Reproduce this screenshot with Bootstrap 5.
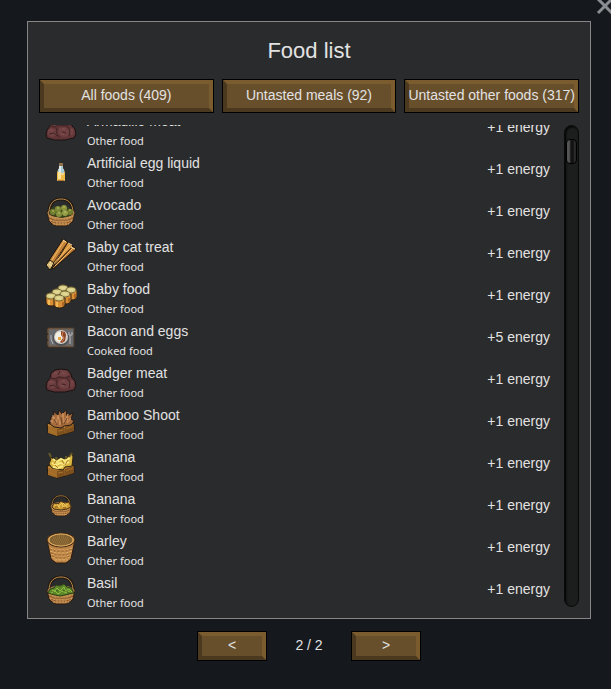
<!DOCTYPE html>
<html lang="en">

<head>
  <meta charset="UTF-8">
  <meta name="viewport" content="width=device-width, initial-scale=1.0">
  <title>Food list</title>
  <link href="https://cdn.jsdelivr.net/npm/bootstrap@5.3.0/dist/css/bootstrap.min.css" rel="stylesheet">
  <style>
    body {
      background: #15191d;
      color: #e2e2e2;
      font-family: "Liberation Sans", Arial, sans-serif;
      font-size: 14px;
      line-height: 20px;
      padding: 21px 20px 28px 27px;
    }

    .food-panel {
      background: #2a2b2c;
      border: 1px solid #868686;
      padding: 11px;
      min-height: 0;
    }

    .food-title {
      font-size: 22px;
      font-weight: 400;
      line-height: 36px;
      margin-bottom: 10px;
    }

    .wood-btn {
      position: relative;
      isolation: isolate;
      height: 34px;
      padding: 0 0 2px;
      color: #e2e2e2;
      white-space: nowrap;
      background: #684f2c;
      border: 1px solid #000;
    }

    .wood-btn::before {
      content: "";
      position: absolute;
      inset: 0;
      z-index: -1;
      border: 4px solid;
      border-color: #7b5c2e #7b5c2e #4b391f #4b391f;
    }

    .wood-btn:hover {
      background: #775c36;
    }

    .tab-btn {
      flex: 1 1 0;
      min-width: 0;
    }

    .page-btn {
      width: 70px;
      height: 30px;
    }

    .page-count {
      width: 84px;
      padding-bottom: 2px;
    }

    .food-area {
      margin-top: 12px;
      min-height: 0;
    }

    .food-rows {
      overflow: hidden;
      padding: 0 14px 0 6px;
    }

    .food-row {
      height: 42px;
      gap: 10px;
    }

    .food-icon {
      width: 32px;
      height: 32px;
      flex: none;
    }

    .food-text {
      padding-top: 6px;
    }

    .food-kind {
      font-family: "Noto Sans", "DejaVu Sans", sans-serif;
      font-size: 11px;
    }

    .food-energy {
      padding-bottom: 2px;
    }

    .scroll-track {
      width: 15px;
      padding: 13px 2px;
      background: #1c1e1d;
      border: 1px solid #090909;
      border-radius: 8px;
      box-shadow: inset 1px 1px 2px #000;
    }

    .scroll-thumb {
      height: 25px;
      margin: 0 -1px;
      border: 1px solid #000;
      border-radius: 4px;
      background: linear-gradient(to right, #555 0 25%, #303030 35%, #131313 45% 70%, #2c2c2c 80%, #252525);
    }

    .close-btn {
      top: -3px;
      right: -3px;
      line-height: 0;
    }
  </style>
</head>

<body class="vh-100 d-flex flex-column position-relative overflow-hidden">
  <svg class="d-none" aria-hidden="true">
    <symbol id="meat" viewBox="0 0 32 32">
      <path d="M5 14l1-5 4-3 6-1 7 1 3 4 1 4 3 3 1 5-2 4-5 1-4 1H9l-3-1-4-1-1-4 1-4z" fill="#613536" stroke="#1a1212" />
      <path d="M7 10l4-3 5-1 6 1 2 4-4 2-6-1-5 2-2-1zM3 18l4-2 4 2 1 5-5 2-4-2zM14 16l6-1 4 3v6l-6 1-5-3zM25 16l3 1 1 4-2 3-2-2z" fill="#704142" />
      <path d="M6 14l4 1 4-2 6 1 5-2M12 16l-1 4 3 5M22 14l3 4-1 6M15 7l-2 4M4 22l5-1 3 3M17 20l4 1" fill="none" stroke="#402324" />
      <path d="M9 9h3M17 9h3M5 18h3M17 17h3M26 18h2M16 22h3" stroke="#845051" />
    </symbol>
    <symbol id="bottle" viewBox="0 0 32 32">
      <path d="M14 9h4v5l2 4v9h-8v-9l2-4z" fill="#cda765" />
      <path d="M14 9h4v3h-4z" fill="#91724c" />
      <path d="M14 12h4v3h1v4h-6v-4h1z" fill="#a9cbd6" />
      <path d="M14 12h2v7h-2z" fill="#dceaec" />
      <path d="M12 19h8v7h-8z" fill="#edbb45" />
      <path d="M13 18h3v7h-3z" fill="#ffe29a" />
      <path d="M16 19h3v2h-3z" fill="#f7d58c" />
      <path d="M13 26h6v1h-6z" fill="#b67933" />
    </symbol>
    <symbol id="basket" viewBox="0 0 32 32">
      <path d="M4 17C4 7 9 3 16 3s12 4 12 14" fill="none" stroke="#211910" stroke-width="3" />
      <path d="M4 17C4 7 9 3 16 3s12 4 12 14" fill="none" stroke="#bd8c4d" stroke-width="1" />
      <path d="M2 16l2 9 3 3 4 2h10l4-2 3-3 2-9z" fill="#b37c42" stroke="#2a1d12" />
      <ellipse cx="16" cy="17" rx="13" ry="5" fill="#4a3820" stroke="#c59656" />
      <path d="M4 22l5 2h14l5-2M6 25l5 2h10l5-2" fill="none" stroke="#8a5830" />
      <path d="M4 20l6 3h12l6-3M5 24l6 2h10l6-2M8 28h16" fill="none" stroke="#d6a461" stroke-dasharray="2 1" />
    </symbol>
    <symbol id="avocado" viewBox="0 0 32 32">
      <use href="#basket" />
      <path d="M4 16l3-4 4-2 4 1 3-2 4 2 3 1 3 4-3 4-8 2-9-2z" fill="#3a431b" />
      <ellipse cx="8" cy="16" rx="3" ry="3" fill="#737f30" />
      <ellipse cx="13" cy="13" rx="3" ry="3" fill="#7f8b37" />
      <ellipse cx="19" cy="12" rx="3" ry="3" fill="#8a943d" />
      <ellipse cx="25" cy="16" rx="3" ry="3" fill="#727e2e" />
      <ellipse cx="14" cy="18" rx="3" ry="3" fill="#84903b" />
      <ellipse cx="20" cy="17" rx="3" ry="3" fill="#969f48" />
      <path d="M7 15h2M12 12h2M18 11h2M24 14h2M13 17h2M19 16h2" stroke="#bcc16d" />
    </symbol>
    <symbol id="sticks" viewBox="0 0 32 32">
      <g stroke="#18130e" stroke-width="1">
        <path d="M3 28L25 7l6 4L8 31z" fill="#bd7930" />
        <path d="M3 27L22 4l6 4L7 30z" fill="#d89540" />
        <path d="M1 27L18 1l5 3L6 32z" fill="#c68439" />
      </g>
      <path d="M5 25L19 3M8 27L25 7M10 28L28 10" stroke="#f0bd6d" />
      <path d="M7 27L22 5M10 27L27 9" stroke="#5b3319" />
      <path d="M1 27l4-5 4 3-4 7z" fill="#d9bb79" stroke="#1b1712" />
      <path d="M4 26l3 2M5 24l1 1M18 2l3 2M23 5l4 2M26 9l4 2" stroke="#ffe3a5" />
    </symbol>
    <symbol id="jars" viewBox="0 0 32 32">
      <defs>
        <g id="jar">
          <path d="M0 3v7c1 4 10 4 11 0V3z" fill="#d98f34" stroke="#2b1e10" />
          <path d="M2 7h2v5H2z" fill="#f2b957" />
          <path d="M8 7h2v4H8z" fill="#b06a26" />
          <ellipse cx="5" cy="3" rx="5" ry="3" fill="#d7cd85" stroke="#77683a" />
          <path d="M3 3h4" stroke="#ece4aa" />
        </g>
      </defs>
      <use href="#jar" x="13" y="5" />
      <use href="#jar" x="21" y="7" />
      <use href="#jar" x="7" y="9" />
      <use href="#jar" x="15" y="11" />
      <use href="#jar" x="1" y="13" />
      <use href="#jar" x="9" y="15" />
    </symbol>
    <symbol id="tray" viewBox="0 0 32 32">
      <path d="M3 6h26v19H3z" fill="#68696d" stroke="#4c3925" />
      <path d="M4 7h24M4 24h24M3 7v18" stroke="#805a33" stroke-dasharray="4 2" />
      <ellipse cx="16" cy="16" rx="8" ry="8" fill="#4d4f52" />
      <ellipse cx="16" cy="15" rx="7" ry="7" fill="#d4cec6" />
      <ellipse cx="15" cy="15" rx="5" ry="5" fill="#f1eee5" />
      <path d="M16 9l4 1 1 3-1 6-3 2-2-1 3-4-2-3z" fill="#8b4328" />
      <path d="M18 10l-1 3 2 3-2 4" fill="none" stroke="#d08455" />
      <path d="M13 15h3v3h-3z" fill="#e3a642" />
      <path d="M6 13v4l2 5M24 10v3h3v-3M25 13v9" fill="none" stroke="#b4b5b8" />
    </symbol>
    <symbol id="crate" viewBox="0 0 32 32">
      <path d="M2 18l12-4 15 4v7l-9 3-8 2-9-3z" fill="#8a5b25" stroke="#21170e" />
      <path d="M3 18l9 3 7-2 1-2 9 1-9 4-8 2-9-3z" fill="#ba8134" />
      <path d="M12 22v8l-9-3v-7z" fill="#a36d29" />
      <path d="M12 23l7-2v7l-7 2zM20 21l9-3v7l-9 3z" fill="#7d501d" />
      <path d="M4 24l7 3M21 23l7-3M13 25l5-1" stroke="#a9722b" />
    </symbol>
    <symbol id="bamboo" viewBox="0 0 32 32">
      <use href="#crate" />
      <path d="M5 18l1-7 3-2-1-4 5 4 1-5 3 4 4-4 1 6 6-3-2 6 3 2-3 4-7 1-3 2-7-1z" fill="#a66c3e" stroke="#281a14" />
      <path d="M7 17l2-6 2 7 2-9 2 10 3-12 1 10 4-9-1 9 4-5" fill="none" stroke="#ce9059" />
      <path d="M9 13l3 6M16 11l1 8M22 12l-3 6" stroke="#704327" />
      <path d="M8 9v3M5 15h2M13 12h1" stroke="#d8a27a" />
    </symbol>
    <symbol id="bananas" viewBox="0 0 32 32">
      <use href="#crate" />
      <path d="M4 6l3 4 4 2 4-2 5 1 4-3 3-3 1 4-1 9-7 1-2 3-11-2-3-4 2-5z" fill="#dab742" stroke="#312411" />
      <path d="M8 11l4 3 4-3 4 2 5-3M7 15l4 2 4-2 4 1 5-2M8 19l5 1 5-2" fill="none" stroke="#f7ea83" stroke-width="2" />
      <path d="M12 11l-3 5M17 12l2 4M23 12l-3 5M10 17l3 3" stroke="#b48025" />
      <path d="M4 5l2 4M11 9l1 3M21 8v3M27 5l-3 4" stroke="#61572a" stroke-width="2" />
    </symbol>
    <symbol id="bananabasket" viewBox="0 0 32 32">
      <use href="#basket" x="4" y="3" width="24" height="25" />
      <path d="M7 17l2-4 4 1 3-3 3 2 5-1 2 5-4 2-6 1-7-1z" fill="#cc9a34" stroke="#4d3517" />
      <path d="M9 15l4 2 4-4 1 4 5-3M12 14l3 4M18 13l4 4" fill="none" stroke="#efca5a" />
      <path d="M10 17h3M18 18h3" stroke="#855018" />
    </symbol>
    <symbol id="barley" viewBox="0 0 32 32">
      <path d="M2 8l4 19 5 4h10l5-4 4-19z" fill="#bb8345" stroke="#2b1b0e" />
      <path d="M5 16l5 2h12l5-2M5 19l6 2h10l6-2M6 22l5 2h10l5-2M7 25l5 2h8l5-2M9 28h14" fill="none" stroke="#dfae68" stroke-dasharray="3 1" />
      <path d="M5 17l6 2h10l6-2M6 21l5 2h10l5-2M7 24l5 2h8l5-2" fill="none" stroke="#94602f" stroke-dasharray="2 2" />
      <ellipse cx="16" cy="8" rx="14" ry="7" fill="#c48b46" stroke="#3b2613" />
      <ellipse cx="16" cy="8" rx="12" ry="6" fill="#81602f" stroke="#dcab63" />
      <path d="M8 6h16M7 8h18M8 10h16M11 12h11M12 4h8" stroke="#a47a40" stroke-dasharray="1 1" />
    </symbol>
    <symbol id="basil" viewBox="0 0 32 32">
      <use href="#basket" />
      <path d="M3 19l2-4 4-1 2-3 4 1 4-2 3 3 4 1 3 5-5 1-4 1-5 1-5-1-4-1z" fill="#5d8529" stroke="#2c4216" />
      <path d="M7 16l3 1 2-3 3 3 4-4 1 4 4-2 3 3M6 19l4-2 3 3 4-3 4 2 4-2" fill="none" stroke="#91bf41" />
      <path d="M11 16l2 1M18 17l2-1M22 18l2 1M8 18h1" stroke="#3b5c1c" />
    </symbol>
  </svg>

  <button type="button" class="close-btn btn p-0 border-0 position-absolute" aria-label="Close">
    <svg width="18" height="18" viewBox="0 0 18 18">
      <path d="M2 2l14 14M16 2L2 16" stroke="#8b8e90" stroke-width="3" />
    </svg>
  </button>

  <main class="food-panel flex-grow-1 d-flex flex-column">
    <h1 class="food-title text-center">Food list</h1>
    <div class="d-flex gap-2">
      <button type="button" class="wood-btn tab-btn">All foods (409)</button>
      <button type="button" class="wood-btn tab-btn">Untasted meals (92)</button>
      <button type="button" class="wood-btn tab-btn">Untasted other foods (317)</button>
    </div>
    <div class="food-area flex-grow-1 d-flex">
      <ul id="foods" class="food-rows list-unstyled mb-0 flex-grow-1"></ul>
      <div class="scroll-track">
        <div class="scroll-thumb"></div>
      </div>
    </div>
  </main>

  <nav class="d-flex justify-content-center align-items-center pt-2 mt-1" aria-label="Pages">
    <button type="button" class="wood-btn page-btn">&lt;</button>
    <span class="page-count text-center">2 / 2</span>
    <button type="button" class="wood-btn page-btn">&gt;</button>
  </nav>

  <script src="https://cdn.jsdelivr.net/npm/bootstrap@5.3.0/dist/js/bootstrap.bundle.min.js"></script>
  <script>
    const foods = [
      ["meat", "Armadillo meat", "Other food", 1],
      ["bottle", "Artificial egg liquid", "Other food", 1],
      ["avocado", "Avocado", "Other food", 1],
      ["sticks", "Baby cat treat", "Other food", 1],
      ["jars", "Baby food", "Other food", 1],
      ["tray", "Bacon and eggs", "Cooked food", 5],
      ["meat", "Badger meat", "Other food", 1],
      ["bamboo", "Bamboo Shoot", "Other food", 1],
      ["bananas", "Banana", "Other food", 1],
      ["bananabasket", "Banana", "Other food", 1],
      ["barley", "Barley", "Other food", 1],
      ["basil", "Basil", "Other food", 1]
    ];
    const list = document.getElementById("foods");
    for (const [icon, name, kind, energy] of foods) {
      const li = document.createElement("li");
      li.className = "food-row d-flex align-items-center";
      li.innerHTML = `
        <svg class="food-icon" aria-hidden="true"><use href="#${icon}"/></svg>
        <div class="food-text flex-grow-1">
          <div>${name}</div>
          <div class="food-kind">${kind}</div>
        </div>
        <span class="food-energy">+${energy} energy</span>`;
      list.appendChild(li);
    }
    // start part way into the first row
    list.scrollTop = 18;
  </script>
</body>

</html>
